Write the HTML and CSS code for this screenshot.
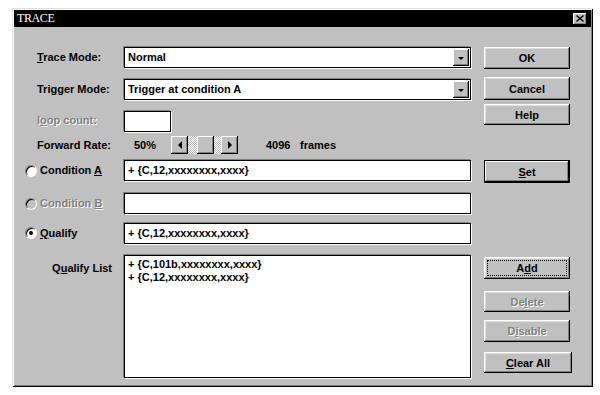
FILE: index.html
```html
<!DOCTYPE html>
<html>
<head>
  <meta charset="UTF-8">
  <title>TRACE</title>
  <link rel="stylesheet" href="styles.css">
</head>
<body>
  <div class="window">
    <!-- 標題列 -->
    <div class="titlebar">
      <span class="title">TRACE</span>
      <button class="close">
        <svg width="8" height="7" viewBox="0 0 8 7"><path d="M0.5 0.5L7.5 6.5M7.5 0.5L0.5 6.5" stroke="#000" stroke-width="1.4"/></svg>
      </button>
    </div>

    <div class="dialog">
      <!-- Trace Mode -->
      <div class="label"><u>T</u>race Mode:</div>
      <div class="combo">Normal<span class="drop"><i class="arrow-down"></i></span></div>
      <button class="btn">OK</button>

      <!-- Trigger Mode -->
      <div class="label mt2">Tri<u>g</u>ger Mode:</div>
      <div class="combo mt2">Trigger at condition A<span class="drop"><i class="arrow-down"></i></span></div>
      <button class="btn h23">Cancel</button>

      <!-- loop count -->
      <div class="label mt7 h19 disabled">l<u>o</u>op count:</div>
      <div class="field short mt7 h19"></div>
      <button class="btn h21">Help</button>

      <!-- Forward Rate -->
      <div class="label h18">Forward Rate:</div>
      <div class="rate">
        <span class="pct">50%</span>
        <div class="scroll">
          <span class="sbtn"><i class="arrow-left"></i></span>
          <span class="track w9"></span>
          <span class="sbtn"></span>
          <span class="track w7"></span>
          <span class="sbtn"><i class="arrow-right"></i></span>
        </div>
        <span class="frames-num">4096</span>
        <span>frames</span>
      </div>
      <div></div>

      <!-- Condition A -->
      <div class="label radio-label"><span class="radio"></span><span>Condition <u>A</u></span></div>
      <div class="field">+ {C,12,xxxxxxxx,xxxx}</div>
      <button class="btn default"><u>S</u>et</button>

      <!-- Condition B -->
      <div class="label radio-label disabled"><span class="radio off"></span><span>Condition <u>B</u></span></div>
      <div class="field"></div>
      <div></div>

      <!-- Qualify -->
      <div class="label radio-label h20"><span class="radio checked"></span><span><u>Q</u>ualify</span></div>
      <div class="field h20">+ {C,12,xxxxxxxx,xxxx}</div>
      <div></div>

      <!-- Qualify List -->
      <div class="label list-label">Q<u>u</u>alify List</div>
      <div class="list">
        <div>+ {C,101b,xxxxxxxx,xxxx}</div>
        <div>+ {C,12,xxxxxxxx,xxxx}</div>
      </div>
      <div class="list-btns">
        <button class="btn focus">A<u>d</u>d</button>
        <button class="btn h21 disabled gap12">De<u>l</u>ete</button>
        <button class="btn disabled gap8">D<u>i</u>sable</button>
        <button class="btn wide h21 gap10"><u>C</u>lear All</button>
      </div>
    </div>
  </div>
</body>
</html>
```

FILE: styles.css
```css
/* 全局樣式 */
* {
  box-sizing: border-box;
  margin: 0;
  padding: 0;
}

body {
  background: #fff;
  font-family: "Liberation Sans", Arial, sans-serif;
  font-size: 11px;
  font-weight: bold;
  color: #000;
}

u {
  text-decoration: underline;
  text-underline-offset: 1px;
}

/* 視窗外框 */
.window {
  width: 581px;
  height: 379px;
  margin: 8px 0 0 12px;
  background: #c0c0c0;
  padding: 2px;
  box-shadow: inset 1px 1px #dfdfdf, inset -1px -1px #000,
              inset 2px 2px #fff, inset -2px -2px #808080;
}

.titlebar {
  height: 17px;
  background: #000;
  display: flex;
  align-items: center;
  justify-content: space-between;
  padding: 0 4px 0 3px;
}

.title {
  color: #fff;
  font-family: "Liberation Serif", "Times New Roman", serif;
  font-weight: normal;
  font-size: 12px;
  letter-spacing: -0.4px;
}

.close {
  width: 14px;
  height: 12px;
  border: none;
  background: #c0c0c0;
  display: flex;
  align-items: center;
  justify-content: center;
  box-shadow: inset -1px -1px #000, inset 1px 1px #fff, inset -2px -2px #808080;
}

/* 對話框主體 */
.dialog {
  display: grid;
  grid-template-columns: 101px 360px 88px;
  grid-template-rows: 30px 27px 32px 24px 33px 30px 32px 124px;
  align-items: start;
  padding: 20px 0 0 9px;
}

.label {
  height: 21px;
  line-height: 21px;
  padding-left: 14px;
  white-space: nowrap;
}

.radio-label {
  display: flex;
  align-items: center;
  gap: 3px;
  padding-left: 2px;
}

.list-label {
  justify-self: end;
  margin: 6px 12px 0 0;
  height: 14px;
  line-height: 14px;
}

.disabled,
.btn.disabled {
  color: #808080;
  text-shadow: 1px 1px 0 #fff;
}

.mt2 { margin-top: 2px; }
.mt7 { margin-top: 7px; }
.h18 { height: 18px; line-height: 18px; }
.h19 { height: 19px; line-height: 19px; }
.h20 { height: 20px; line-height: 20px; }
.btn.h21 { height: 21px; }
.btn.h23 { height: 23px; }

/* 輸入框、下拉 */
.field, .combo, .list {
  width: 347px;
  background: #fff;
  border: 1px solid #000;
  box-shadow: -1px -1px 0 #808080, 1px 1px 0 #fff;
  height: 21px;
  line-height: 19px;
  padding-left: 3px;
  white-space: nowrap;
}

.field.short {
  width: 47px;
}

.combo {
  position: relative;
}

.drop {
  position: absolute;
  right: 1px;
  top: 1px;
  width: 16px;
  height: 17px;
  background: #c0c0c0;
  box-shadow: inset -1px -1px #000, inset 1px 1px #fff, inset -2px -2px #808080;
  display: flex;
  align-items: center;
  justify-content: center;
}

.arrow-down {
  border-left: 3px solid transparent;
  border-right: 3px solid transparent;
  border-top: 3px solid #000;
  margin-top: 1px;
}

.arrow-left {
  border-top: 4px solid transparent;
  border-bottom: 4px solid transparent;
  border-right: 4px solid #000;
}

.arrow-right {
  border-top: 4px solid transparent;
  border-bottom: 4px solid transparent;
  border-left: 4px solid #000;
}

/* Forward Rate 捲軸 */
.rate {
  display: flex;
  align-items: center;
  height: 18px;
  padding-left: 10px;
}

.pct {
  width: 37px;
}

.scroll {
  display: flex;
  height: 18px;
}

.sbtn {
  width: 17px;
  height: 18px;
  background: #c0c0c0;
  box-shadow: inset -1px -1px #000, inset 1px 1px #fff, inset -2px -2px #808080;
  display: flex;
  align-items: center;
  justify-content: center;
}

.track {
  background: repeating-conic-gradient(#fff 0 25%, #c0c0c0 0 50%) 0 0 / 2px 2px;
}
.w9 { width: 9px; }
.w7 { width: 7px; }

.frames-num {
  margin-left: 28px;
  width: 34px;
}

/* 按鈕 */
.btn {
  width: 86px;
  height: 22px;
  border: none;
  background: #c0c0c0;
  font-family: inherit;
  font-size: 11px;
  font-weight: bold;
  color: #000;
  box-shadow: inset -1px -1px #000, inset 1px 1px #fff,
              inset -2px -2px #808080, inset 2px 2px #dfdfdf;
}

.btn.default {
  height: 23px;
  border: 1px solid #000;
  box-shadow: inset -1px -1px #000, inset 1px 1px #fff,
              inset -2px -2px #808080;
}

.btn.focus {
  outline: 1px dotted #000;
  outline-offset: -4px;
  margin-top: 2px;
}

.btn.wide {
  width: 88px;
}

.gap12 { margin-top: 12px; }
.gap8 { margin-top: 8px; }
.gap10 { margin-top: 10px; }

.list-btns {
  display: flex;
  flex-direction: column;
}

/* 清單 */
.list {
  height: 123px;
  line-height: 13px;
  padding-top: 2px;
}

/* 圓形選項 */
.radio {
  width: 12px;
  height: 12px;
  border-radius: 50%;
  background: #fff;
  border: 1px solid;
  border-color: #808080 #fff #fff #808080;
  box-shadow: inset 1px 1px #000;
  display: flex;
  align-items: center;
  justify-content: center;
  flex-shrink: 0;
}

.radio.off {
  background: #c0c0c0;
}

.radio.checked::after {
  content: "";
  width: 4px;
  height: 4px;
  border-radius: 50%;
  background: #000;
}
```
